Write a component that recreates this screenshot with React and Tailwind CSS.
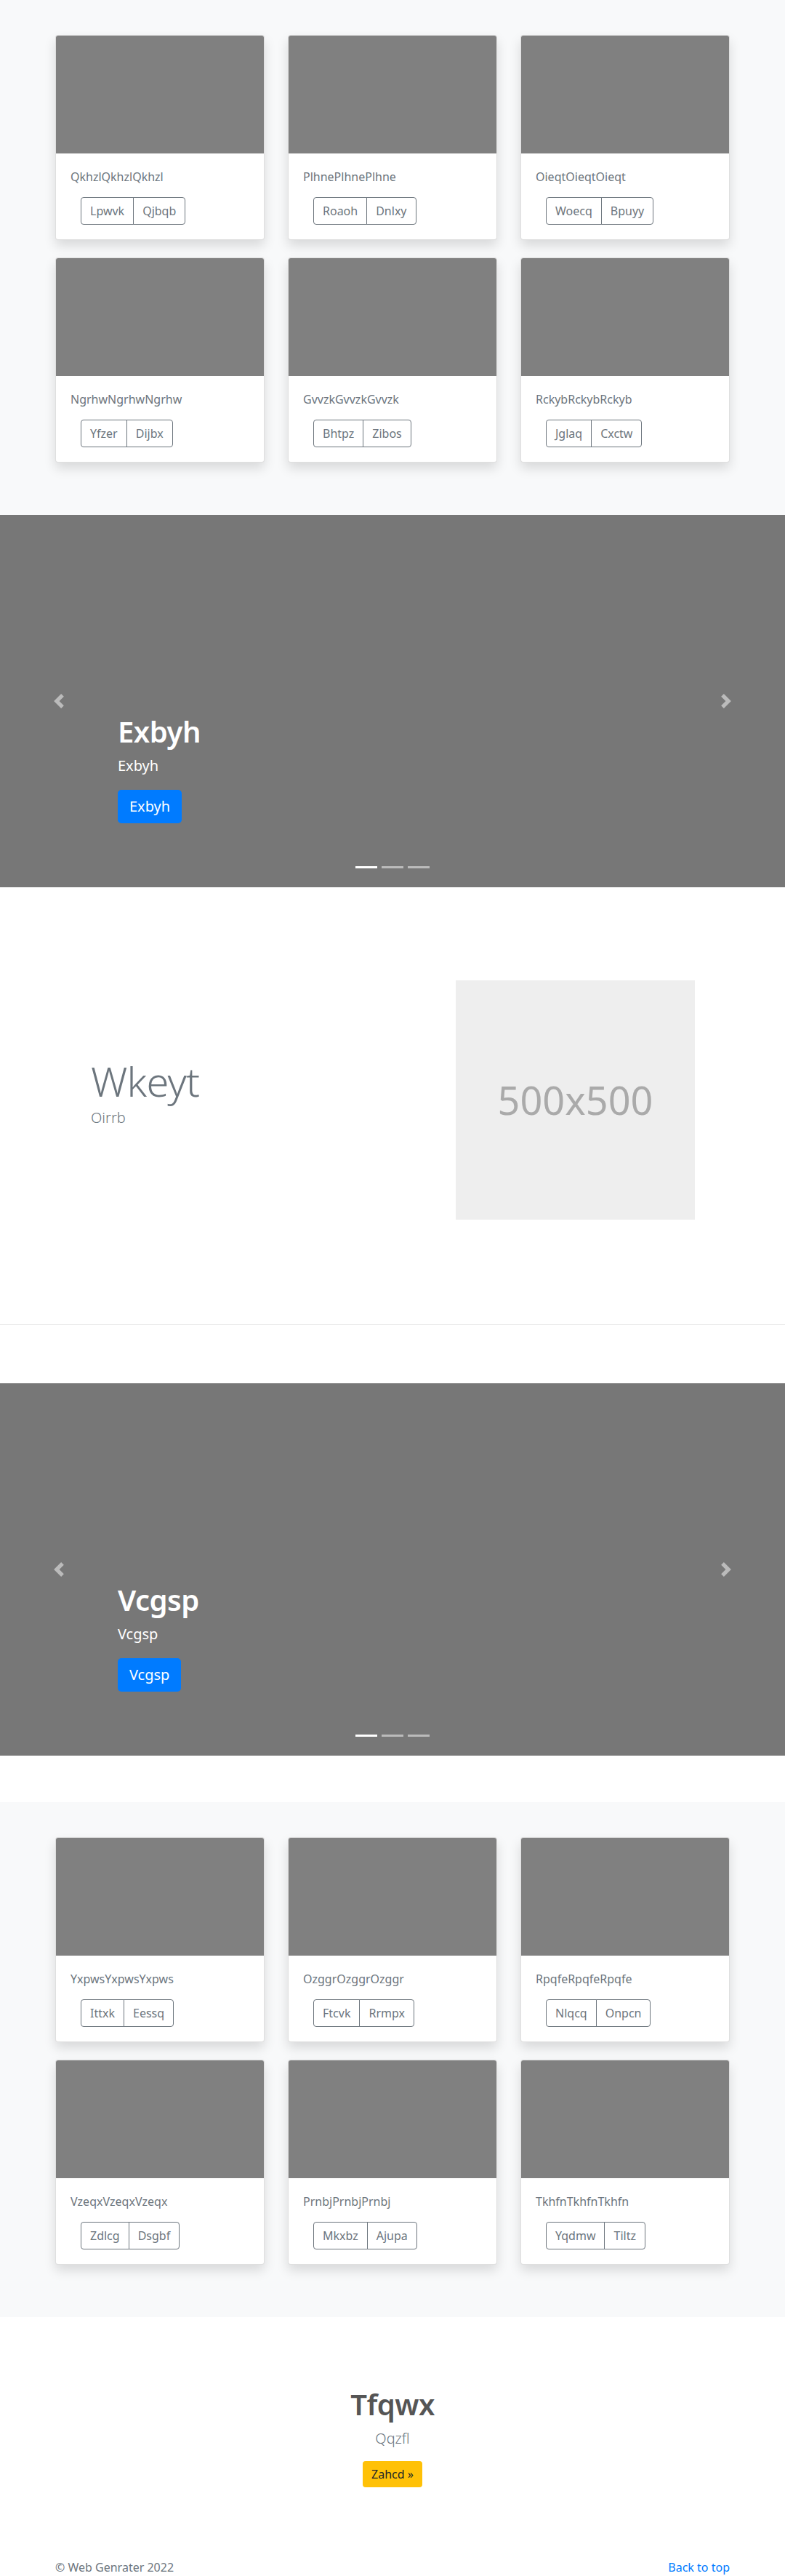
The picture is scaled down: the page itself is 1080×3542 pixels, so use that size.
import React from "react";

const font = "font-['Noto_Sans','Open_Sans',sans-serif]";

const section1 = [
  ["QkhzlQkhzlQkhzl", "Lpwvk", "Qjbqb"],
  ["PlhnePlhnePlhne", "Roaoh", "Dnlxy"],
  ["OieqtOieqtOieqt", "Woecq", "Bpuyy"],
  ["NgrhwNgrhwNgrhw", "Yfzer", "Dijbx"],
  ["GvvzkGvvzkGvvzk", "Bhtpz", "Zibos"],
  ["RckybRckybRckyb", "Jglaq", "Cxctw"],
];

const section2 = [
  ["YxpwsYxpwsYxpws", "Ittxk", "Eessq"],
  ["OzggrOzggrOzggr", "Ftcvk", "Rrmpx"],
  ["RpqfeRpqfeRpqfe", "Nlqcq", "Onpcn"],
  ["VzeqxVzeqxVzeqx", "Zdlcg", "Dsgbf"],
  ["PrnbjPrnbjPrnbj", "Mkxbz", "Ajupa"],
  ["TkhfnTkhfnTkhfn", "Yqdmw", "Tiltz"],
];

function Card({ title, a, b }) {
  return (
    <div className="mb-6 w-[288px] overflow-hidden rounded-[4px] border border-black/[.125] bg-white shadow-[0_8px_16px_rgba(0,0,0,0.13)]">
      <div className="h-[162px] bg-[#808080]" />
      <div className="p-5">
        <p className="mb-4 text-[16px] leading-6 text-[#6c757d]">{title}</p>
        <div className="ml-[14px] inline-flex">
          <button className="rounded-l-[4px] border border-[#6c757d] px-3 py-[6px] text-[16px] leading-6 text-[#6c757d]">
            {a}
          </button>
          <button className="-ml-px rounded-r-[4px] border border-[#6c757d] px-3 py-[6px] text-[16px] leading-6 text-[#6c757d]">
            {b}
          </button>
        </div>
      </div>
    </div>
  );
}

function CardSection({ items }) {
  return (
    <section className="bg-[#f8f9fa] pt-12 pb-12">
      <div className="mx-auto grid w-[928px] grid-cols-3 gap-x-8">
        {items.map(([t, a, b]) => (
          <Card key={t} title={t} a={a} b={b} />
        ))}
      </div>
    </section>
  );
}

function Chevron({ dir }) {
  return (
    <svg width="20" height="20" viewBox="0 0 8 8" fill="#fff">
      {dir === "left" ? (
        <path d="M5.25 0l-4 4 4 4 1.5-1.5L4.25 4l2.5-2.5L5.25 0z" />
      ) : (
        <path d="M2.75 0l-1.5 1.5L3.75 4l-2.5 2.5L2.75 8l4-4-4-4z" />
      )}
    </svg>
  );
}

function Carousel({ label }) {
  return (
    <div className="relative h-[512px] bg-[#777]">
      <div className="absolute top-0 bottom-0 left-0 flex w-[15%] items-center justify-center opacity-50">
        <Chevron dir="left" />
      </div>
      <div className="absolute top-0 right-0 bottom-0 flex w-[15%] items-center justify-center opacity-50">
        <Chevron dir="right" />
      </div>
      <div className="absolute right-[15%] bottom-[88px] left-[15%] text-left text-white">
        <h1 className="mb-2 text-[40px] leading-[48px] font-semibold tracking-[-0.5px]">{label}</h1>
        <p className="mb-[18px] text-[20px] leading-[30px]">{label}</p>
        <a className="inline-block rounded-[5px] bg-[#007bff] px-4 py-2 text-[20px] leading-[30px] text-white">
          {label}
        </a>
      </div>
      <div className="absolute bottom-[26px] left-0 right-0 flex justify-center gap-[6px]">
        <span className="h-[3px] w-[30px] bg-white" />
        <span className="h-[3px] w-[30px] bg-white opacity-50" />
        <span className="h-[3px] w-[30px] bg-white opacity-50" />
      </div>
    </div>
  );
}

export default function App() {
  return (
    <div className={`${font} bg-white text-[#212529]`}>
      <CardSection items={section1} />
      <Carousel label="Exbyh" />

      <section className="pt-[128px] pb-[144px]">
        <div className="flex items-center">
          <div className="ml-[125px] w-[502px]">
            <h2 className="mb-2 text-[56px] leading-[56px] font-light tracking-[-0.8px] text-[#6c757d]">Wkeyt</h2>
            <p className="mb-4 text-[20px] leading-[30px] font-light text-[#6c757d]">Oirrb</p>
          </div>
          <div className="flex h-[329px] w-[329px] items-center justify-center bg-[#eee]">
            <span className="text-[54px] text-[#aaa]">500x500</span>
          </div>
        </div>
      </section>
      <hr className="border-0 border-t border-black/10" />
      <div className="mt-20 mb-16">
        <Carousel label="Vcgsp" />
      </div>

      <CardSection items={section2} />

      <section className="pt-24 pb-[50px] text-center">
        <h1 className="mb-2 text-[40px] leading-[48px] font-semibold tracking-[-0.5px] text-[#555]">Tfqwx</h1>
        <p className="mb-4 text-[20px] leading-[30px] font-light text-[#6c757d]">Qqzfl</p>
        <a className="inline-block rounded-[4px] bg-[#ffc107] px-3 py-[6px] text-[16px] leading-6 text-[#212529]">
          Zahcd »
        </a>
      </section>

      <footer className="py-12">
        <div className="mx-auto flex w-[928px] justify-between text-[16px] leading-6">
          <p className="text-[#6c757d]">© Web Genrater 2022</p>
          <a className="text-[#007bff]">Back to top</a>
        </div>
      </footer>
    </div>
  );
}
